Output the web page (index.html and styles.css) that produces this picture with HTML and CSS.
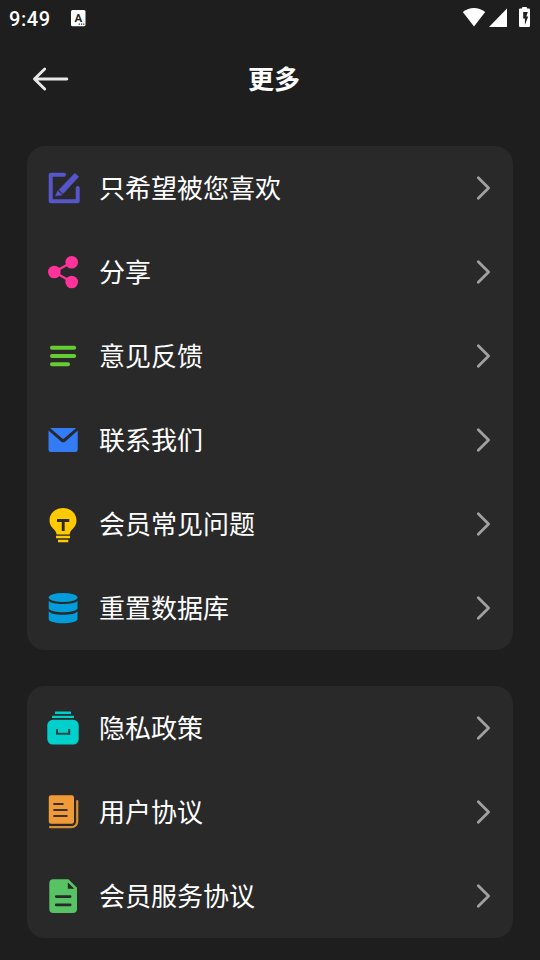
FILE: index.html
```html
<!DOCTYPE html>
<html lang="zh-CN">
<head>
<meta charset="utf-8">
<title>更多</title>
<link rel="stylesheet" href="styles.css">
</head>
<body>
<svg class="defs" width="0" height="0"><symbol id="chevron" viewBox="0 0 16 28"><path d="M2.300 3.800 12.600 14 2.300 24.200" fill="none" stroke="#a0a0a0" stroke-width="2.800" stroke-linecap="round" stroke-linejoin="round"/></symbol></svg>
<header class="status">
  <span class="time">9:49</span>
  <svg class="badge" viewBox="0 0 16 18"><rect x="1" y="1" width="14.5" height="16.3" rx="1.5" fill="#fff"/><text class="badge-letter" x="8.300" y="13" text-anchor="middle">A</text><path d="M8.700 15.200h1.200M11 15.200h1.200M13.200 15.200h1.200" stroke="#1e1e1e" stroke-width="1.200"/></svg>
  <svg class="signals" viewBox="0 0 72 26" fill="#fff"><path d="M2.800 9C6.500 6.300 10 5.100 14 5.100S21.500 6.300 25.200 9L14 23.500Z"/><path d="M47 5.600V24H29Z"/><path fill-rule="evenodd" d="M62 5.500V5Q62 4 63 4H66Q67 4 67 5V5.500H69Q70 5.500 70 6.500V23Q70 24 69 24H60Q59 24 59 23V6.500Q59 5.500 60 5.500ZM63.200 9V15.500H64.900V22L68.200 13.500H66.300L67.800 9Z"/></svg>
</header>
<nav class="title-bar">
  <svg class="back" viewBox="0 0 40 28"><path d="M36.800 14H4.500M14.700 4 4.500 14 14.700 24" fill="none" stroke="#e8e8e8" stroke-width="2.900" stroke-linecap="round" stroke-linejoin="round"/></svg>
  <h1>更多</h1>
</nav>
<main>
  <section class="card">
    <div class="row"><svg class="icon" viewBox="0 0 40 40"><path d="M21 6.700H7.700V33.200H34.700V20" fill="none" stroke="#5655ca" stroke-width="4" stroke-linecap="round" stroke-linejoin="round"/><path d="M16 21.800 31.800 5.200 35.700 8.800 20 25.700ZM14.800 22.700 19.200 26.900 12.500 28Z" fill="#5655ca" stroke="#5655ca" stroke-width=".5" stroke-linejoin="round"/></svg><span>只希望被您喜欢</span><svg class="chevron"><use href="#chevron"/></svg></div>
    <div class="row"><svg class="icon" viewBox="0 0 40 40" fill="#ff3399"><path d="M28.700 10.200 11.300 20 28.700 30" fill="none" stroke="#ff3399" stroke-width="2.300"/><circle cx="28.700" cy="10.200" r="6.300"/><circle cx="11.300" cy="20" r="6.300"/><circle cx="28.700" cy="30" r="6.300"/></svg><span>分享</span><svg class="chevron"><use href="#chevron"/></svg></div>
    <div class="row"><svg class="icon" viewBox="0 0 40 40"><path d="M9 11.800H31.200M9 20H31.200M9 28.300H25" stroke="#66cc33" stroke-width="4" stroke-linecap="round"/></svg><span>意见反馈</span><svg class="chevron"><use href="#chevron"/></svg></div>
    <div class="row"><svg class="icon" viewBox="0 0 40 40" fill="#347bf6"><path d="M7 8H33.200L21.300 18.200Q20.200 19.200 19 18.200Z"/><path d="M5.500 10.500 18 21.400Q20.200 23.200 22.400 21.400L34.700 10.500V29.700Q34.700 31.900 32.500 31.900H7.700Q5.500 31.900 5.500 29.700Z"/></svg><span>联系我们</span><svg class="chevron"><use href="#chevron"/></svg></div>
    <div class="row"><svg class="icon" viewBox="0 0 40 40"><path d="M13.600 30.500C13.600 25.500 6.500 24 6.500 16.500C6.500 9 12.500 4 20 4S33.500 9 33.500 16.500C33.500 24 26.700 25.500 26.700 30.500ZM13 31.800H27V34.200H13ZM15 35.700H25.300V38.300H15Z" fill="#ffca00"/><path d="M14 16.500H26.300M20.200 16.500V27" fill="none" stroke="#292929" stroke-width="2.900"/></svg><span>会员常见问题</span><svg class="chevron"><use href="#chevron"/></svg></div>
    <div class="row"><svg class="icon" viewBox="0 0 40 40" fill="#039ed9"><ellipse cx="20.100" cy="9.500" rx="14.400" ry="4.500"/><path d="M5.700 12.700C8 17 32.200 17 34.500 12.700V20.500C32.200 25.500 8 25.500 5.700 20.500ZM5.700 23.200C8 28 32.200 28 34.500 23.200V31.500C32.200 36.600 8 36.600 5.700 31.500Z"/></svg><span>重置数据库</span><svg class="chevron"><use href="#chevron"/></svg></div>
  </section>
  <section class="card">
    <div class="row"><svg class="icon" viewBox="0 0 40 40" fill="#00d0cb"><rect x="12" y="3.500" width="16" height="2.500" rx=".5"/><rect x="9" y="7.800" width="22" height="2.200" rx=".5"/><rect x="4.300" y="11.800" width="31.400" height="24.800" rx="5.500"/><path d="M14 21V25.700H26.200V21" fill="none" stroke="#294343" stroke-width="2"/></svg><span>隐私政策</span><svg class="chevron"><use href="#chevron"/></svg></div>
    <div class="row"><svg class="icon" viewBox="0 0 40 40"><rect x="5.800" y="3.200" width="25.200" height="28.600" rx="2.200" fill="#f09b38"/><path d="M11.200 12H19.700M11.200 18H23.700M11.200 24H23.700" stroke="#3c3025" stroke-width="2.200" stroke-linecap="round"/><path d="M34.200 9.200V29Q34.200 35.200 28 35.200H7" fill="none" stroke="#d98d36" stroke-width="2.200" stroke-linecap="round"/></svg><span>用户协议</span><svg class="chevron"><use href="#chevron"/></svg></div>
    <div class="row"><svg class="icon" viewBox="0 0 40 40"><path d="M10 3.200H25.500L34 11.800V33Q34 37 30 37H10.300Q6.300 37 6.300 33V7.200Q6.300 3.200 10.300 3.200Z" fill="#57c364"/><path d="M24.800 6.500V12.800H31.300Z" fill="#292929"/><path d="M13.200 20.600H27.200M13.200 28.900H27.200" stroke="#292929" stroke-width="2.600" stroke-linecap="round"/></svg><span>会员服务协议</span><svg class="chevron"><use href="#chevron"/></svg></div>
  </section>
</main>
</body>
</html>
```
FILE: styles.css
```css
* { box-sizing: border-box; }
body { margin: 0; height: 960px; overflow: hidden; background: #1e1e1e; color: #fff; font-family: "Noto Sans CJK SC", sans-serif; }
svg { display: block; flex: none; }
.defs { position: absolute; }
.status { display: flex; height: 36px; padding: 0 9px 0 9px; }
.time { width: 61px; font: 500 20px/38px Roboto, sans-serif; letter-spacing: .6px; }
.badge { width: 16px; height: 18px; margin-top: 9px; }
.badge-letter { font: 700 11.5px Roboto, sans-serif; fill: #1e1e1e; }
.signals { width: 72px; height: 26px; margin: 3px -1px 0 auto; }
.title-bar { display: flex; align-items: center; height: 86px; padding: 0 30px; }
.back { width: 40px; height: 28px; margin-top: -1px; }
.title-bar h1 { flex: 1; margin: -2px 32px 0 0; text-align: center; font-size: 26px; line-height: 40px; font-weight: 700; }
main { display: flex; flex-direction: column; gap: 36px; padding: 24px 27px 0; }
.card { border-radius: 18px; background: #292929; }
.row { display: flex; align-items: center; height: 84px; padding: 0 21px 0 16px; }
.icon { width: 40px; height: 40px; margin-right: 16px; }
.row span { flex: 1; margin-top: -2px; font-size: 26px; line-height: 40px; }
.chevron { width: 16px; height: 28px; }
```
